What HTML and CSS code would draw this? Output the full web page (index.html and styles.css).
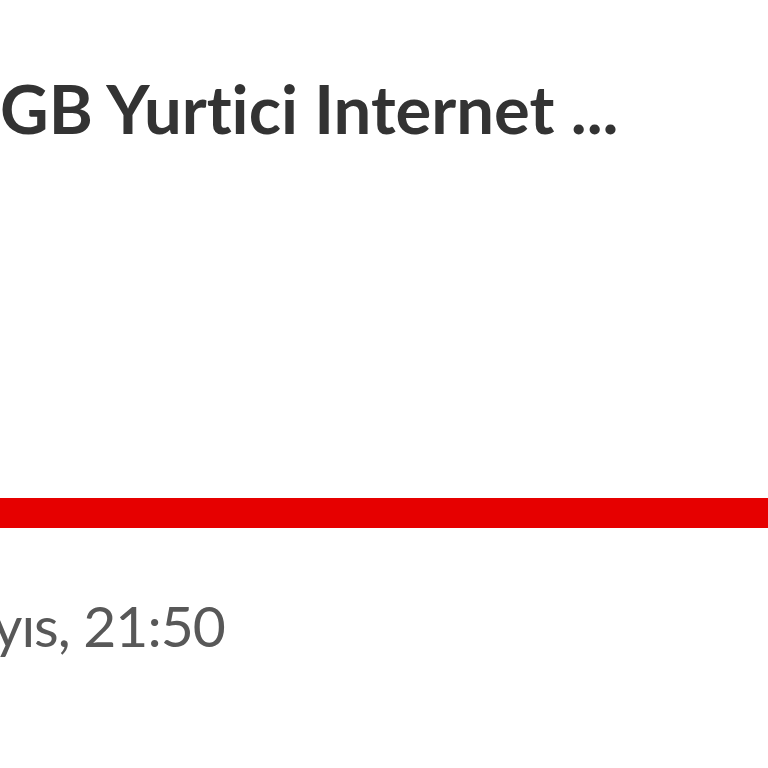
FILE: index.html
```html
<!DOCTYPE html>
<html>
<head>
<meta charset="utf-8">
<link rel="stylesheet" href="styles.css">
</head>
<body>
<main class="card">
  <h1 class="title">GB Yurtici Internet ...</h1>
  <div class="bar"></div>
  <p class="date">yıs, 21:50</p>
</main>
</body>
</html>
```
FILE: styles.css
```css
html, body {
  margin: 0;
  padding: 0;
  background: #ffffff;
  width: 768px;
  height: 768px;
  overflow: hidden;
}
.card {
  display: flex;
  flex-direction: column;
}
.title {
  margin: 75px 0 0 0;
  height: 67px;
  font-family: Lato, sans-serif;
  font-weight: 700;
  font-size: 67px;
  line-height: 67px;
  color: #333333;
  white-space: nowrap;
  font-variant-ligatures: none;
}
.bar {
  margin-top: 356px;
  height: 30px;
  background: #e60000;
}
.date {
  margin: 68px 0 0 -7px;
  font-family: Lato, sans-serif;
  font-weight: 400;
  font-size: 57px;
  line-height: 58px;
  letter-spacing: -1px;
  color: #585858;
  white-space: nowrap;
}
```
